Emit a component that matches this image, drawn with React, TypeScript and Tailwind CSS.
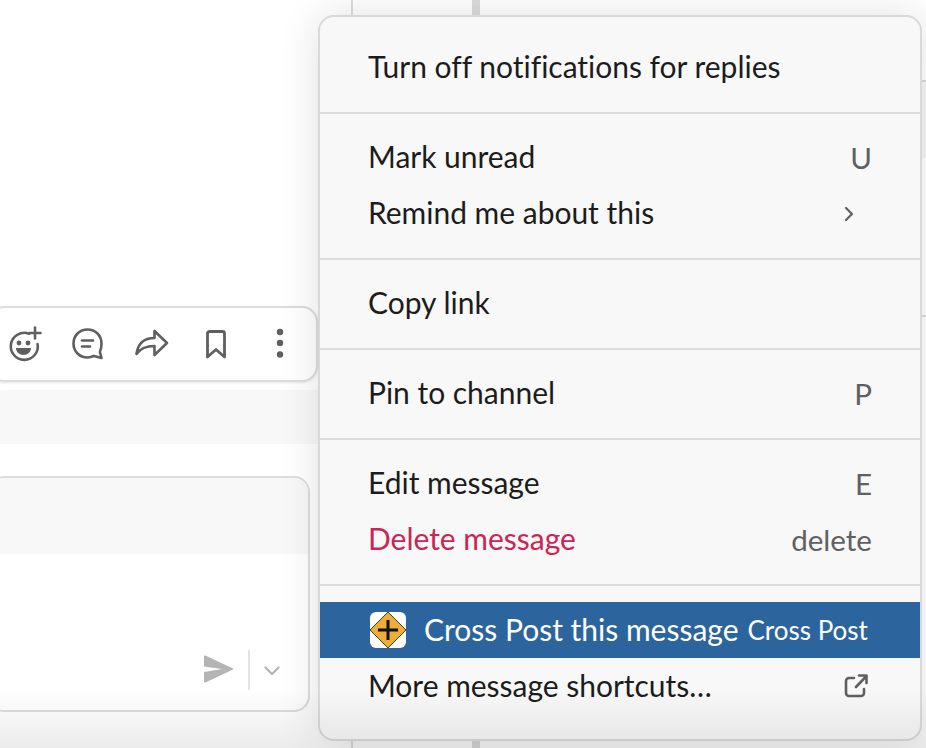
const font = { fontFamily: '"Lato", "Liberation Sans", sans-serif' };

function Row({ children, right, className = 'text-[#1d1c1d]' }: { children: React.ReactNode; right?: React.ReactNode; className?: string }) {
  return (
    <div className={`flex h-14 items-center justify-between pl-[48px] pr-[48px] text-[30px] leading-none tracking-[-0.02px] ${className}`}>
      <span className="pb-[4px]">{children}</span>
      {right && <span className="text-[29.6px] tracking-normal text-[#616061]">{right}</span>}
    </div>
  );
}

function Divider() {
  return <div className="h-[2px] bg-[#dddddd]" />;
}

function ToolCell({ children }: { children: React.ReactNode }) {
  return <div className="flex h-[64px] w-[64px] items-center justify-center">{children}</div>;
}

function Toolbar() {
  return (
    <div className="absolute left-[-12px] top-[306px] flex h-[76px] w-[330px] items-center justify-end rounded-[16px] border-2 border-[#dddddd] bg-white pr-[4px] text-[#5f5f5f] shadow-[0_1px_3px_rgba(0,0,0,0.1)]">
      <ToolCell>
        <svg width="34" height="36" viewBox="0 0 34 36" fill="none" stroke="currentColor" strokeWidth="2.6" strokeLinecap="round" className="ml-[2px]">
          <path d="M21 7.700A13.500 13.500 0 1 0 29.600 18" />
          <circle cx="11" cy="17" r="2.400" fill="currentColor" stroke="none" />
          <circle cx="20" cy="17" r="2.400" fill="currentColor" stroke="none" />
          <path d="M8 22h15c0 4-3.400 7-7.500 7S8 26 8 22z" fill="currentColor" stroke="none" />
          <path d="M27 1.500v11M21.500 7h11" />
        </svg>
      </ToolCell>
      <ToolCell>
        <svg width="34" height="34" viewBox="0 0 34 34" fill="none" stroke="currentColor" strokeWidth="2.6" strokeLinecap="round" strokeLinejoin="round">
          <path d="M16.500 2.500C8.500 2.500 2.500 8.500 2.500 16.500s6 14 14 14c3 0 5-.8 6.500-1.600l7.500 2.100-1.600-6c1-2.300 1.600-5 1.600-8.500 0-8-6-14-14-14z" />
          <path d="M11 13.500h11M11 19.500h8" />
        </svg>
      </ToolCell>
      <ToolCell>
        <svg width="34" height="30" viewBox="0 0 34 30" fill="none" stroke="currentColor" strokeWidth="2.6" strokeLinecap="round" strokeLinejoin="round">
          <path d="M19.500 2v7C10 9 3 13.500 1.500 25c4-6 10-8 18-8v9L32 14z" />
        </svg>
      </ToolCell>
      <ToolCell>
        <svg width="22" height="30" viewBox="0 0 22 30" fill="none" stroke="currentColor" strokeWidth="2.8" strokeLinecap="round" strokeLinejoin="round">
          <path d="M2.500 28V4.500a2 2 0 0 1 2-2h13a2 2 0 0 1 2 2V28L11 20.500z" />
        </svg>
      </ToolCell>
      <ToolCell>
        <svg width="12" height="30" viewBox="0 0 12 30" fill="currentColor" className="mb-[2px]">
          <circle cx="6" cy="4" r="3.200" />
          <circle cx="6" cy="15" r="3.200" />
          <circle cx="6" cy="26.500" r="3.200" />
        </svg>
      </ToolCell>
    </div>
  );
}

function Composer() {
  return (
    <div className="absolute left-[-12px] top-[476px] flex h-[236px] w-[322px] flex-col overflow-hidden rounded-[16px] border-2 border-[#dddddd] bg-white">
      <div className="h-[76px] bg-[#f8f8f8]" />
      <div className="flex flex-1 items-end justify-end pb-[20px] pr-[28px]">
        <svg width="30" height="28" viewBox="0 0 30 28" fill="#b4b4b4" className="mb-[7px]">
          <path d="M1 1.500a1 1 0 0 1 1.400-.9L29 13a1 1 0 0 1 0 2L2.400 27.400a1 1 0 0 1-1.400-.9V17l18-3-18-2.500z" />
        </svg>
        <div className="ml-[15px] h-[40px] w-[2px] bg-[#e3e3e3]" />
        <svg width="16" height="10" viewBox="0 0 16 10" fill="none" stroke="#b4b4b4" strokeWidth="2.2" strokeLinecap="round" strokeLinejoin="round" className="mb-[14px] ml-[14px]">
          <path d="M1.500 1.500 8 8l6.500-6.500" />
        </svg>
      </div>
    </div>
  );
}

function Menu() {
  return (
    <div className="absolute left-[318px] top-[15px] flex h-[726px] w-[604px] flex-col rounded-[16px] border-2 border-[#d9d9d9] bg-[#f8f8f8] shadow-[0_0_40px_rgba(0,0,0,0.12)]">
      <div className="pb-4 pt-[23px]">
        <Row>Turn off notifications for replies</Row>
      </div>
      <Divider />
      <div className="py-4">
        <Row right="U">Mark unread</Row>
        <Row
          right={
            <svg width="10" height="16" viewBox="0 0 10 16" fill="none" stroke="#616061" strokeWidth="2.2" strokeLinecap="round" strokeLinejoin="round" className="mr-[18px]">
              <path d="M2 2l6 6-6 6" />
            </svg>
          }
        >
          Remind me about this
        </Row>
      </div>
      <Divider />
      <div className="py-4">
        <Row>Copy link</Row>
      </div>
      <Divider />
      <div className="py-4">
        <Row right="P">Pin to channel</Row>
      </div>
      <Divider />
      <div className="py-4">
        <Row right="E">Edit message</Row>
        <Row right="delete" className="text-[#cd2553]">
          Delete message
        </Row>
      </div>
      <Divider />
      <div className="pt-4">
        <div className="flex h-14 items-center bg-[#2c659e] pl-[50px] text-white">
          <svg width="36" height="36" viewBox="0 0 36 36" className="shrink-0">
            <rect width="36" height="36" rx="6" fill="#ffffff" />
            <path d="M18 0 36 18 18 36 0 18z" fill="#eeae36" stroke="#4a3a1a" strokeWidth="1" />
            <path d="M18 8v20M8 18h20" stroke="#111111" strokeWidth="3" />
          </svg>
          <span className="ml-[18px] pb-[3px] text-[30px] leading-none">Cross Post this message</span>
          <span className="ml-[9px] text-[26px] leading-none">Cross Post</span>
        </div>
        <div className="mt-[1px]">
          <Row
            right={
              <svg width="24" height="24" viewBox="0 0 24 24" fill="none" stroke="#616061" strokeWidth="2.6" strokeLinecap="round" strokeLinejoin="round" className="mb-[2px] mr-[4px]">
                <path d="M10 4H5a3 3 0 0 0-3 3v12a3 3 0 0 0 3 3h12a3 3 0 0 0 3-3v-4" />
                <path d="M12 13 22.500 2M15 1.500h7.500V9" />
              </svg>
            }
          >
            More message shortcuts…
          </Row>
        </div>
      </div>
    </div>
  );
}

export default function App() {
  return (
    <div className="relative h-[748px] w-[926px] overflow-hidden bg-white" style={font}>
      <div className="flex h-full">
        <div className="flex w-[353px] flex-col border-r-2 border-[#dddddd]">
          <div className="h-[390px]" />
          <div className="h-[54px] bg-[#f8f8f8]" />
        </div>
        <div className="ml-[119px] h-full w-[8px] bg-[#dcdcdc]" />
        <div className="flex flex-1 flex-col">
          <div className="mt-[80px] h-[78px] border-t-2 border-[#dddddd] bg-[#f6f6f6]" />
          <div className="mt-[157px] h-[2px] bg-[#dddddd]" />
        </div>
      </div>
      <Toolbar />
      <Composer />
      <Menu />
      <div className="pointer-events-none absolute inset-x-0 bottom-0 h-[60px] bg-gradient-to-b from-transparent to-[rgba(0,0,0,0.08)]" />
    </div>
  );
}
